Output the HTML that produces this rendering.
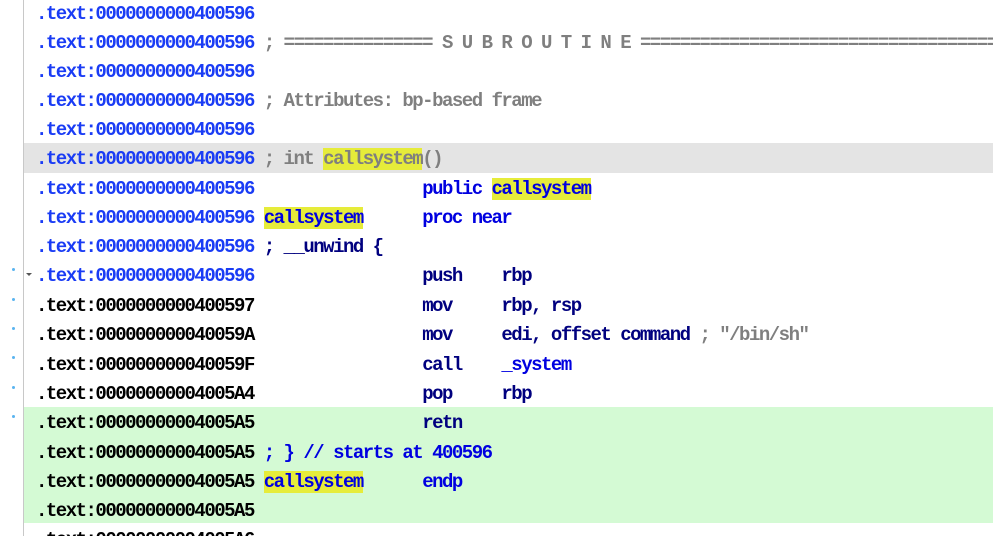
<!DOCTYPE html>
<html><head><meta charset="utf-8"><style>
html,body{margin:0;padding:0;background:#fff;width:993px;height:536px;overflow:hidden;position:relative}
.g{position:absolute;left:23px;top:0;width:1px;height:536px;background:#c8c8c8}
.bg{position:absolute;left:24px;right:0}
.r{position:absolute;left:36px;height:29px;line-height:29px;white-space:pre;font-family:"Liberation Mono",monospace;font-weight:bold;font-size:19px;letter-spacing:-1.5px;color:#000}
.a{color:#1a3cf5}.k{color:#000}.c{color:#7f7f7f}.n{color:#00007f}.b{color:#0000e0}
.h{background:#e6ec3a}
.dot{position:absolute;left:12px;width:3px;height:3px;border-radius:50%;background:#5ab4f0}
</style></head><body>
<div class="bg" style="top:143px;height:30px;background:#e4e4e4"></div>
<div class="bg" style="top:407px;height:116px;background:#d4fad4"></div>
<div class="g"></div>
<div class="dot" style="top:268px"></div>
<div class="dot" style="top:298px"></div>
<div class="dot" style="top:327px"></div>
<div class="dot" style="top:356px"></div>
<div class="dot" style="top:386px"></div>
<div class="dot" style="top:415px"></div>
<div style="position:absolute;left:26px;top:273px;width:0;height:0;border-left:3px solid transparent;border-right:3px solid transparent;border-top:3px solid #555"></div>
<div class="r a" style="top:0px">.text:0000000000400596</div>
<div class="r" style="top:29px"><span class="a">.text:0000000000400596</span> <span class="c">; =============== S U B R O U T I N E =======================================</span></div>
<div class="r a" style="top:58px">.text:0000000000400596</div>
<div class="r" style="top:87px"><span class="a">.text:0000000000400596</span> <span class="c">; Attributes: bp-based frame</span></div>
<div class="r a" style="top:116px">.text:0000000000400596</div>
<div class="r" style="top:145px"><span class="a">.text:0000000000400596</span> <span class="c">; int <span class="h">callsystem</span>()</span></div>
<div class="r" style="top:175px"><span class="a">.text:0000000000400596</span>                 <span class="b">public <span class="h">callsystem</span></span></div>
<div class="r" style="top:204px"><span class="a">.text:0000000000400596</span> <span class="b h">callsystem</span>      <span class="b">proc near</span></div>
<div class="r" style="top:233px"><span class="a">.text:0000000000400596</span> <span class="n">; __unwind {</span></div>
<div class="r" style="top:262px"><span class="a">.text:0000000000400596</span>                 <span class="n">push    rbp</span></div>
<div class="r" style="top:292px">.text:0000000000400597                 <span class="n">mov     rbp, rsp</span></div>
<div class="r" style="top:321px">.text:000000000040059A                 <span class="n">mov     edi, offset command</span> <span class="c">; "/bin/sh"</span></div>
<div class="r" style="top:351px">.text:000000000040059F                 <span class="n">call    <span class="b">_system</span></span></div>
<div class="r" style="top:380px">.text:00000000004005A4                 <span class="n">pop     rbp</span></div>
<div class="r" style="top:409px">.text:00000000004005A5                 <span class="n">retn</span></div>
<div class="r" style="top:439px">.text:00000000004005A5 <span class="b">; } // starts at 400596</span></div>
<div class="r" style="top:468px">.text:00000000004005A5 <span class="b h">callsystem</span>      <span class="b">endp</span></div>
<div class="r" style="top:497px">.text:00000000004005A5</div>
<div class="r" style="top:526px">.text:00000000004005A6</div>
</body></html>
